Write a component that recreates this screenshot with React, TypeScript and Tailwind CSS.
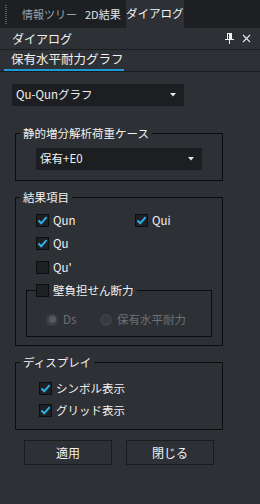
import { ReactNode } from 'react'

const font = { fontFamily: '"Noto Sans CJK JP", "Noto Sans", sans-serif' }

function Check({ on }: { on: boolean }) {
  return (
    <span className="flex h-[13px] w-[13px] shrink-0 items-center justify-center border border-[#0c0d0e] bg-[#1e2023]">
      {on && (
        <svg width="11" height="11" viewBox="0 0 11 11">
          <path d="M1.5 5.5 L4.2 8.3 L9.6 2.2" fill="none" stroke="#2bb3ea" strokeWidth="2" />
        </svg>
      )}
    </span>
  )
}

function CheckRow({ on, label, className = '' }: { on: boolean; label: string; className?: string }) {
  return (
    <div className={`flex items-center gap-[4px] ${className}`}>
      <Check on={on} />
      <span className="whitespace-nowrap text-[11.5px] leading-[13px] text-[#f2f2f2]">{label}</span>
    </div>
  )
}

function Radio({ label, dot, className = '' }: { label: string; dot?: boolean; className?: string }) {
  return (
    <div className={`flex items-center gap-[5px] ${className}`}>
      <span className="flex h-[12px] w-[12px] shrink-0 items-center justify-center rounded-full bg-[#3d4044]">
        <span className={`h-[7px] w-[7px] rounded-full ${dot ? 'bg-[#56595d]' : 'bg-[#36393d]'}`} />
      </span>
      <span className="whitespace-nowrap text-[11.5px] leading-[13px] text-[#6c7176]">{label}</span>
    </div>
  )
}

function Select({ value, className = '' }: { value: string; className?: string }) {
  return (
    <div className={`flex h-[22px] items-center bg-[#1c1e21] ${className}`}>
      <span className="flex-1 pl-[4px] text-[11.5px] text-[#f2f2f2]">{value}</span>
      <svg width="6" height="4" viewBox="0 0 6 4" className="mr-[8px]">
        <path d="M0 0 H6 L3 3.5 Z" fill="#e6e6e6" />
      </svg>
    </div>
  )
}

// fieldset: the legend follows the fieldset's padding, so inner spacing goes on a wrapper div
function Group({ title, children, className = '', inner = '' }: { title: string; children: ReactNode; className?: string; inner?: string }) {
  return (
    <fieldset className={`w-[208px] border border-[#0c0d0e] ${className}`}>
      <legend className="ml-[4px] px-[3px] text-[11.5px] leading-[14px] text-[#f2f2f2]">{title}</legend>
      <div className={inner}>{children}</div>
    </fieldset>
  )
}

export default function App() {
  return (
    <div className="flex h-[504px] w-[260px] flex-col overflow-hidden bg-[#2d3034]" style={font}>
      {/* document tabs */}
      <div className="flex h-[28px] items-stretch whitespace-nowrap bg-[#1d1f22]">
        <div className="ml-[5px] mr-[12px] flex flex-col justify-center gap-[1px] py-[4px]">
          {Array.from({ length: 10 }).map((_, i) => (
            <span key={i} className="h-[1px] w-[2px] bg-[#55595e]" />
          ))}
        </div>
        <div className="flex items-center px-[3px] text-[11px] text-[#9aa4ad]">情報ツリー</div>
        <div className="flex items-center px-[5px] text-[11px] text-[#e0e4e8]">2D結果</div>
        <div className="flex w-[58px] items-center justify-center bg-[#2d3034] text-[11.5px] text-[#f5f5f5]">
          ダイアログ
        </div>
      </div>

      {/* panel header */}
      <div className="flex h-[22px] items-center border-b border-[#1a1c1e] pl-[12px] pr-[9px]">
        <span className="flex-1 text-[12px] text-[#f2f2f2]">ダイアログ</span>
        <svg width="11" height="11" viewBox="0 0 11 11" className="mr-[7px]">
          <path d="M3 0.5 H8 M3.5 0.5 V6 M7.5 0.5 V6 M1 6.5 H10 M5.5 6.5 V11" fill="none" stroke="#f0f0f0" strokeWidth="1" />
          <rect x="5" y="0.5" width="2.5" height="5.5" fill="#f0f0f0" />
        </svg>
        <svg width="9" height="9" viewBox="0 0 9 9">
          <path d="M1 1 L8 8 M8 1 L1 8" stroke="#e8e8e8" strokeWidth="1.1" />
        </svg>
      </div>

      {/* page tab */}
      <div className="flex h-[22px] items-end border-b border-[#1a1c1e]">
        <div className="ml-[4px] flex h-[21px] w-[120px] items-center border-b-2 border-[#1c9ad6] pl-[7px] text-[12.5px] text-[#f2f2f2]">
          保有水平耐力グラフ
        </div>
      </div>

      <div className="flex flex-col pl-[12px] pt-[12px]">
        <Select value="Qu-Qunグラフ" className="w-[172px]" />

        <Group title="静的増分解析荷重ケース" className="ml-[3px] mt-[20px]" inner="pb-[10px] pl-[20px] pt-[8px]">
          <Select value="保有+E0" className="w-[166px]" />
        </Group>

        <Group title="結果項目" className="ml-[3px] mt-[9px]" inner="pb-[8px] pl-[20px] pt-[10px]">
          <div className="flex">
            <CheckRow on label="Qun" className="w-[99px]" />
            <CheckRow on label="Qui" />
          </div>
          <CheckRow on label="Qu" className="mt-[10px]" />
          <CheckRow on={false} label="Qu'" className="mt-[11px]" />
          <fieldset className="-ml-[10px] mt-[10px] w-[186px] border border-[#0c0d0e]">
            <legend className="ml-[9px] pr-[3px]">
              <CheckRow on={false} label="壁負担せん断力" />
            </legend>
            <div className="flex pb-[10px] pl-[19px] pt-[16px]">
              <Radio label="Ds" dot className="w-[54px]" />
              <Radio label="保有水平耐力" />
            </div>
          </fieldset>
        </Group>

        <Group title="ディスプレイ" className="ml-[3px] mt-[9px]" inner="pb-[12px] pl-[23px] pt-[13px]">
          <CheckRow on label="シンボル表示" />
          <CheckRow on label="グリッド表示" className="mt-[9px]" />
        </Group>

        <div className="ml-[12px] mt-[10px] flex gap-[14px]">
          <button className="h-[25px] w-[88px] border border-[#191b1d] text-[12px] text-[#f2f2f2]">適用</button>
          <button className="h-[25px] w-[88px] border border-[#191b1d] text-[12px] text-[#f2f2f2]">閉じる</button>
        </div>
      </div>
    </div>
  )
}
